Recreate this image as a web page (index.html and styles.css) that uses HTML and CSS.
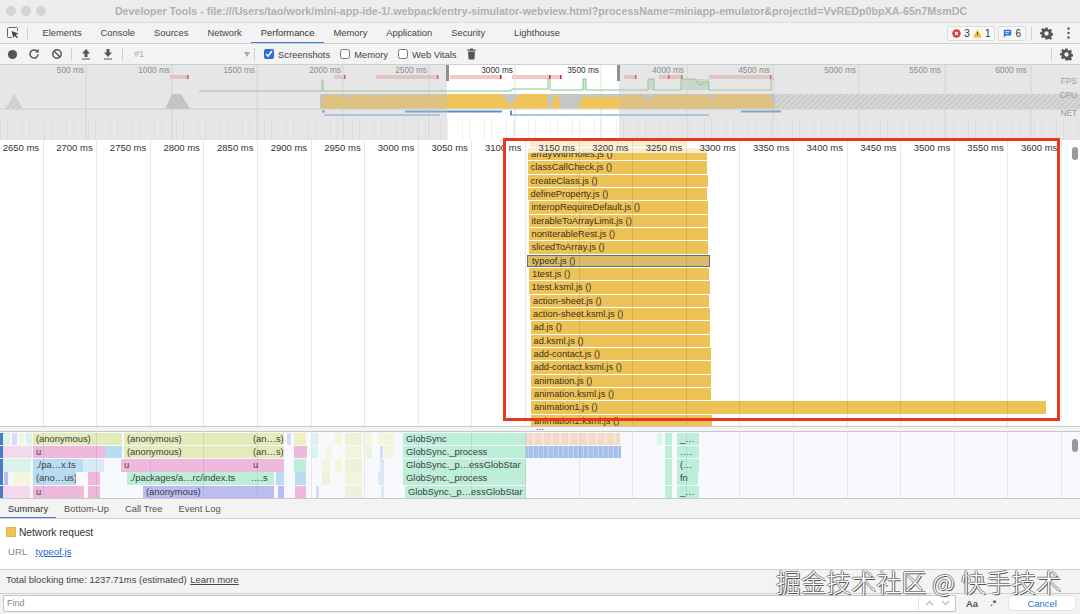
FILE: index.html
```html
<!DOCTYPE html>
<html lang="en">
<head>
	<meta charset="UTF-8">
	<title>Developer Tools</title>
	<link rel="stylesheet" href="styles.css">
</head>
<body>
	<div id="app">
		<header class="titlebar">
			<div class="lights"><i></i><i></i><i></i></div>
			<div class="title">Developer Tools - file:///Users/tao/work/mini-app-ide-1/.webpack/entry-simulator-webview.html?processName=miniapp-emulator&amp;projectId=VvREDp0bpXA-65n7MsmDC</div>
		</header>

		<nav class="tabbar">
			<svg class="ic-inspect" width="12" height="12" viewBox="0 0 12 12"><path d="M5 10.5H1.5a1 1 0 0 1-1-1V1.5a1 1 0 0 1 1-1h8a1 1 0 0 1 1 1V4" fill="none" stroke="#666"/><path d="M4.5 4l7 2.6-2.8 1.1 2.3 2.6-1 1-2.4-2.6-1 2.6z" fill="#444"/></svg>
			<span class="sep"></span>
			<a class="tab">Elements</a>
			<a class="tab">Console</a>
			<a class="tab">Sources</a>
			<a class="tab">Network</a>
			<a class="tab on">Performance</a>
			<a class="tab">Memory</a>
			<a class="tab">Application</a>
			<a class="tab">Security</a>
			<a class="tab last">Lighthouse</a>
			<div class="tab-right">
				<div class="badge">
					<svg width="9" height="9" viewBox="0 0 9 9"><circle cx="4.5" cy="4.5" r="4.2" fill="#d93a3f"/><path d="M3 3l3 3M6 3L3 6" stroke="#fff" stroke-width="1.1"/></svg>
					<span>3</span>
					<svg width="9" height="9" viewBox="0 0 9 9"><path d="M4.5.4L8.8 8.4H.2z" fill="#f2bd2e"/><path d="M4.5 3v3" stroke="#6b5410"/></svg>
					<span>1</span>
				</div>
				<div class="badge">
					<svg width="9" height="9" viewBox="0 0 9 9"><path d="M.8.8h7.4v5.6H3L.8 8.4z" fill="#2f74e0"/><path d="M2.2 2.6h4.6M2.2 4.4h3.4" stroke="#fff" stroke-width=".8"/></svg>
					<span>6</span>
				</div>
				<span class="sep"></span>
				<svg class="gear" width="13" height="13" viewBox="0 0 24 24"><use href="#gear-shape"/></svg>
				<svg class="dots" width="3" height="12" viewBox="0 0 3 12"><circle cx="1.5" cy="1.5" r="1.2"/><circle cx="1.5" cy="6" r="1.2"/><circle cx="1.5" cy="10.5" r="1.2"/></svg>
			</div>
		</nav>

		<div class="toolbar">
			<svg class="tool" width="11" height="11" viewBox="0 0 11 11"><circle cx="5.5" cy="5.5" r="4.6" fill="#555"/></svg>
			<svg class="tool" width="12" height="12" viewBox="0 0 12 12"><path d="M10 6.2a4 4 0 1 1-1.2-3" fill="none" stroke="#555" stroke-width="1.5"/><path d="M10.6.8v3.6H7z" fill="#555"/></svg>
			<svg class="tool" width="12" height="12" viewBox="0 0 12 12"><circle cx="6" cy="6" r="4.2" fill="none" stroke="#555" stroke-width="1.5"/><path d="M3 3l6 6" stroke="#555" stroke-width="1.5"/></svg>
			<span class="sep"></span>
			<svg class="tool" width="10" height="12" viewBox="0 0 10 12"><path d="M5 1l4 4.5H6.5V9h-3V5.5H1zM1 10.4h8v1H1z" fill="#555"/></svg>
			<svg class="tool" width="10" height="12" viewBox="0 0 10 12"><path d="M3.5 1h3v3.500H9L5 9 1 4.500h2.500zM1 10.4h8v1H1z" fill="#555"/></svg>
			<span class="sep"></span>
			<div class="rec-select"><span>#1</span><b></b></div>
			<span class="sep"></span>
			<label class="chk first"><input type="checkbox" checked>Screenshots</label>
			<label class="chk"><input type="checkbox">Memory</label>
			<label class="chk"><input type="checkbox">Web Vitals</label>
			<svg class="trash" width="9" height="12" viewBox="0 0 9 12"><path d="M3 .5h3v1h2.8v1.300H.2V1.500H3zM1 3.500h7L7.400 11.500H1.600z" fill="#555"/></svg>
			<div class="tool-right">
				<span class="sep"></span>
				<svg class="gear" width="13" height="13" viewBox="0 0 24 24"><use href="#gear-shape"/></svg>
			</div>
		</div>

		<section class="overview">
			<svg width="1080" height="75" viewBox="0 64 1080 75">
				<defs>
					<pattern id="hatch" width="4" height="4" patternUnits="userSpaceOnUse" patternTransform="rotate(45)">
						<rect width="4" height="4" fill="#e6e6e6"/><rect width="1.5" height="4" fill="#cbcbcb"/>
					</pattern>
					<pattern id="shots" width="22" height="24" patternUnits="userSpaceOnUse">
						<path d="M.5 0V24M7.5 0V24" stroke="#efefef" fill="none"/>
					</pattern>
					<path id="gear-shape" d="M10 1h4l.6 3.100 2.100.9 2.700-1.800 2.800 2.800-1.800 2.700.9 2.100 3.100.6v4l-3.100.6-.9 2.100 1.800 2.700-2.800 2.800-2.700-1.800-2.100.9L14 23h-4l-.6-3.100-2.100-.9-2.700 1.800-2.800-2.800 1.800-2.700-.9-2.100L0 14v-4l3.100-.6.9-2.100-1.800-2.700 2.800-2.800 2.700 1.800 2.100-.9zM12 8a4 4 0 1 0 0 8 4 4 0 0 0 0-8z" fill="#555" fill-rule="evenodd"/>
				</defs>

				<rect x="0" y="118" width="1080" height="21" fill="url(#shots)"/>
				<g class="ov-grid">
					<path d="M86 64V139M172 64V139M257 64V139M343 64V139M429 64V139M515 64V139M601 64V139M687 64V139M773 64V139M859 64V139M945 64V139M1031 64V139"/>
				</g>

				<g class="fps-bars">
					<rect x="170" y="74" width="19" height="4"/><rect x="334" y="74" width="11" height="4"/>
					<rect x="376" y="74" width="62" height="4"/><rect x="450" y="74" width="52" height="4"/>
					<rect x="512" y="74" width="49" height="4"/><rect x="624" y="74" width="12" height="4"/>
					<rect x="659" y="74" width="23" height="4"/><rect x="709" y="74" width="62" height="4"/>
				</g>
				<g class="fps-ticks">
					<rect x="187" y="74" width="1.5" height="4"/><rect x="344" y="74" width="1.5" height="4"/>
					<rect x="437" y="74" width="1.5" height="4"/><rect x="500" y="74" width="1.5" height="4"/>
					<rect x="549" y="74" width="1.5" height="4"/><rect x="560" y="74" width="1.5" height="4"/>
					<rect x="635" y="74" width="1.5" height="4"/><rect x="668" y="74" width="1.5" height="4"/>
					<rect x="681" y="74" width="1.5" height="4"/><rect x="770" y="74" width="1.5" height="4"/>
				</g>

				<rect class="fps-fill" x="681" y="78" width="28" height="11"/>
				<rect class="fps-fill" x="648" y="78" width="6" height="11"/>
				<rect class="fps-fill" x="583" y="78" width="3" height="11"/>
				<path class="fps-line" d="M199 90H322V79H323V90H511L512 88H548V78H550V89H583V78H586V89H648V78H654V89H681V78H696V81H699V84H702V81H709V89H771V78H774"/>

				<rect x="775" y="93" width="305" height="15" fill="url(#hatch)"/>
				<path d="M5 108L14 93L23 108z" fill="url(#hatch)"/>
				<path class="cpu-grey" d="M165 108L172 93H181L190 108zM320 93H775V108H320z"/>
				<path class="cpu-yellow" d="M320 108L324 94H345L349 98L353 94H376L379 97L383 94H445L447 93H500L505 97L511 105L516 97L520 93H547L549 108H552L554 94H558L561 108H578L582 96H618L625 94H640L650 100L656 94H708L712 99L716 93H770L775 108z"/>
				<line class="cpu-base" x1="0" y1="108" x2="1080" y2="108"/>

				<rect class="net-dark" x="405" y="109.5" width="97" height="2"/>
				<rect class="net-dark" x="741" y="109.5" width="40" height="2"/>
				<rect class="net-dark" x="322" y="109.5" width="3" height="2"/>
				<rect class="net-light" x="324" y="113" width="116" height="2"/>
				<rect class="net-light" x="512" y="113" width="197" height="2"/>
				<rect class="net-dark" x="510" y="109.5" width="2" height="5"/>

				<rect class="dim" x="0" y="64" width="447" height="75"/>
				<rect class="dim" x="619" y="64" width="461" height="75"/>
				<rect class="handle" x="446" y="64" width="3" height="16"/>
				<rect class="handle" x="617" y="64" width="3" height="16"/>

				<g class="ov-time">
					<text x="84" y="72">500 ms</text><text x="170" y="72">1000 ms</text><text x="255" y="72">1500 ms</text>
					<text x="341" y="72">2000 ms</text><text x="427" y="72">2500 ms</text>
					<text class="dark" x="513" y="72">3000 ms</text><text class="dark" x="599" y="72">3500 ms</text>
					<text x="684" y="72">4000 ms</text><text x="770" y="72">4500 ms</text><text x="856" y="72">5000 ms</text>
					<text x="941" y="72">5500 ms</text><text x="1027" y="72">6000 ms</text>
				</g>
				<g class="ov-lane">
					<text x="1077" y="83">FPS</text><text x="1077" y="97">CPU</text><text x="1077" y="115">NET</text>
				</g>
			</svg>
		</section>

		<section class="flame" id="flame"></section>
		<div class="splitter"><span>...</span></div>
		<section class="lower" id="lower"></section>

		<nav class="subtabs">
			<a class="subtab on">Summary</a>
			<a class="subtab">Bottom-Up</a>
			<a class="subtab">Call Tree</a>
			<a class="subtab">Event Log</a>
		</nav>

		<section class="summary">
			<div class="sum-head"><span class="swatch"></span>Network request</div>
			<div class="sum-url"><span class="key">URL</span><a class="link">typeof.js</a></div>
		</section>

		<footer class="status">Total blocking time: 1237.71ms (estimated) <a>Learn more</a></footer>

		<div class="findbar">
			<div class="find-input">
				<span class="find-ph">Find</span>
				<div class="find-arrows">
					<svg width="9" height="6" viewBox="0 0 9 6"><path d="M1 5l3.5-3.500L8 5" fill="none" stroke="#bbb" stroke-width="1.3"/></svg>
					<svg width="9" height="6" viewBox="0 0 9 6"><path d="M1 1l3.5 3.500L8 1" fill="none" stroke="#bbb" stroke-width="1.3"/></svg>
				</div>
			</div>
			<span class="find-aa">Aa</span>
			<span class="find-re">.*</span>
			<button class="find-cancel">Cancel</button>
		</div>
	</div>

	<div class="redframe"></div>
	<div class="watermark">掘金技术社区 @ 快手技术</div>

	<script src="flame.js"></script>
</body>
</html>
```

FILE: styles.css
```css
* {margin: 0; padding: 0; box-sizing: border-box;}
html, body {width: 1080px; height: 614px; overflow: hidden; background: #fff;}
body {font: 9px "Liberation Sans", Arial, sans-serif; color: #333;}
#app {display: flex; flex-direction: column; width: 1080px; height: 614px;}

.sep {display: block; width: 1px; height: 13px; background: #d0d0d0; flex: none;}

/* title */
.titlebar {position: relative; flex: none; height: 23px; background: #ededed; border-bottom: 1px solid #dcdcdc; display: flex; align-items: center; justify-content: center; padding-left: 2px;}
.lights {position: absolute; left: 6px; top: 6px; display: flex; gap: 5px;}
.lights i {display: block; width: 10px; height: 10px; border-radius: 50%; background: #d4d4d4;}
.title {font-size: 10.7px; font-weight: bold; color: #b0b0b0; white-space: nowrap;}

/* tabs */
.tabbar {flex: none; height: 21px; background: #f3f3f3; border-bottom: 1px solid #d0d0d0; display: flex; align-items: center; padding-left: 7px;}
.ic-inspect {flex: none; margin-right: 8px;}
.tabbar > .sep {margin-right: 5px;}
.tab {padding: 0 9.5px; height: 20px; line-height: 19px; color: #444; font-size: 9.4px; white-space: nowrap;}
.tab.on {color: #333; border-bottom: 1px solid #3d7fd6;}
.tab.last {margin-left: 10px;}
.tab-right {margin-left: auto; display: flex; align-items: center; padding-right: 10px;}
.badge {display: flex; align-items: center; gap: 3px; height: 15px; padding: 0 4px; margin-right: 3px; border: 1px solid #ddd; border-radius: 2px; background: #f8f8f8; font-size: 10px;}
.tab-right .sep {margin: 0 8px 0 2px;}
.dots {margin-left: 14px; fill: #555;}

/* toolbar */
.toolbar {flex: none; height: 21px; background: #f3f3f3; border-bottom: 1px solid #d0d0d0; display: flex; align-items: center; padding-left: 7px;}
.tool {flex: none;}
.toolbar > :nth-child(1) {margin-right: 10px;}
.toolbar > :nth-child(2) {margin-right: 11px;}
.toolbar > :nth-child(3) {margin-right: 8px;}
.toolbar > :nth-child(4) {margin-right: 9px;}
.toolbar > :nth-child(5) {margin-right: 12px;}
.toolbar > :nth-child(6) {margin-right: 9px;}
.rec-select {display: flex; align-items: center; justify-content: space-between; width: 126px; margin-left: 5px; padding: 0 4px 0 6px; color: #aaa;}
.rec-select b {width: 0; height: 0; border: 3px solid transparent; border-top: 5px solid #aaa; border-bottom: 0;}
.chk {display: flex; align-items: center; gap: 4px; margin-right: 10px; color: #444; font-size: 9.4px;}
.chk.first {margin-left: 9px;}
.chk input {width: 10px; height: 10px; margin: 0; accent-color: #2a6fd6;}
.trash {flex: none; margin-left: 1px;}
.tool-right {margin-left: auto; display: flex; align-items: center; gap: 8px; padding-right: 7px;}

/* overview */
.overview {flex: none; height: 75px; background: #fff; overflow: hidden;}
.overview svg {display: block;}
.ov-grid path {stroke: #e2e2e2; fill: none;}
.ov-time text {font: 8.3px "Liberation Sans", Arial, sans-serif; fill: #8e8e8e; text-anchor: end;}
.ov-time text.dark {fill: #333;}
.ov-lane text {font: 8.3px "Liberation Sans", Arial, sans-serif; fill: #999; text-anchor: end;}
.fps-bars rect {fill: #f6c5c5;}
.fps-ticks rect {fill: #d8202a;}
.fps-line {fill: none; stroke: #86c586;}
.fps-fill {fill: #cfe8cf;}
.cpu-grey {fill: #c6c6c6;}
.cpu-yellow {fill: #f0c457;}
.cpu-base {stroke: #d8d8d8;}
.net-dark {fill: #5f8fd0;}
.net-light {fill: #a9c7ec;}
.dim {fill: #c0c0c0; fill-opacity: .4;}
.handle {fill: #8f8f8f;}

/* main flame chart */
.flame {position: relative; flex: none; height: 286px; overflow: hidden; background: #fff;}
.lane {position: absolute; left: 0; top: 0; width: 1080px;}
.bar {position: absolute; height: 12.4px; line-height: 12.4px; padding-left: 3px; font-size: 9.3px; color: #3a3320; white-space: nowrap; overflow: hidden; background: #edc257;}
.bar.sel {padding-left: 5px; background: #dcbc68; outline: 1.5px solid #6e6e6e; outline-offset: -1px; z-index: 1;}
.ruler-band {position: absolute; left: 0; top: 0; width: 1080px; height: 13px; background: rgba(255, 255, 255, .72); z-index: 2;}
.grid {position: absolute; left: -10px; top: 0; height: 100%; display: flex; z-index: 3;}
.cell {flex: none; width: 53.6px; height: 100%; border-right: 1px solid rgba(0, 0, 0, .09); text-align: right; padding-right: 3.5px; font-size: 9.5px; line-height: 15px; color: #333; white-space: nowrap;}
.scroll-thumb {position: absolute; left: 1072px; width: 6px; height: 13px; border-radius: 3px; background: #9a9a9a; z-index: 4;}

.splitter {flex: none; height: 6px; background: #f3f3f3; border-top: 1px solid #c8c8c8; border-bottom: 1px solid #c8c8c8; padding-left: 536px; font-size: 9px; line-height: 1px; color: #444;}

/* lower flame chart */
.lower {position: relative; flex: none; height: 66px; overflow: hidden; background: #f8f9fd;}
.lower .bar {height: 12.6px; line-height: 12.6px; color: #3c3c3c; font-size: 9.4px;}
.lower .cell {border-right-color: rgba(0, 0, 0, .07);}
.c-g {background: #e2ebb9;}
.c-p {background: #efb9dd;}
.c-b {background: #b9dcf0;}
.c-m {background: #bceed9;}
.c-l {background: #bcbcf2;}
.c-y {background: #eef1bd;}
.c-e {background: #4a7ac8;}
.lower .c-o {background: repeating-linear-gradient(90deg, #f3d9c6 0, #f3d9c6 5px, #e6d8cc 5px, #e6d8cc 6px, #f6e4d6 6px, #f6e4d6 9px);}
.lower .c-s {background: repeating-linear-gradient(90deg, #a9c4ea 0, #a9c4ea 2px, #c3d3ee 2px, #c3d3ee 3px, #a2bfe8 3px, #a2bfe8 5px);}
.bar.f {opacity: .5;}

/* details */
.subtabs {flex: none; height: 21px; background: #f3f3f3; border-top: 1px solid #c8c8c8; border-bottom: 1px solid #d0d0d0; display: flex; align-items: stretch;}
.subtab {padding: 0 8px; line-height: 19px; color: #555; font-size: 9.4px; white-space: nowrap;}
.subtab.on {color: #333; border-bottom: 1px solid #3d7fd6;}
.summary {flex: none; height: 50px; padding: 7px 0 0 6px; background: #fff; overflow: hidden;}
.sum-head {display: flex; align-items: center; gap: 3px; height: 12px; font-size: 10.2px; color: #333;}
.swatch {display: block; width: 10px; height: 10px; background: #edc257; border: 1px solid #e2b546;}
.sum-url {display: flex; gap: 8px; margin-top: 8px; height: 12px; line-height: 12px; font-size: 9.7px;}
.key {color: #888; padding-left: 2px;}
.link {color: #1a66d2; text-decoration: underline;}
.status {flex: none; height: 25px; background: #f3f3f3; border-top: 1px solid #d0d0d0; border-bottom: 1px solid #d0d0d0; padding-left: 6px; line-height: 20px; color: #444; font-size: 9.5px;}
.status a {text-decoration: underline; margin-left: 1px;}

/* find */
.findbar {flex: 1; background: #f3f3f3; display: flex; align-items: center; padding: 0 3px 2px 3px;}
.find-input {flex: none; width: 953px; height: 17px; background: #fff; border: 1px solid #c4c4c4; border-radius: 2px; display: flex; align-items: center; justify-content: space-between;}
.find-ph {padding-left: 3px; color: #888;}
.find-arrows {display: flex; align-items: center; gap: 7px; height: 100%; padding: 0 5px 0 6px; border-left: 1px solid #e6e6e6;}
.find-aa {margin-left: 10px; font-size: 9.5px; font-weight: bold; color: #555;}
.find-re {margin-left: 12px; font-size: 9px; font-weight: bold; color: #555;}
.find-cancel {margin-left: 12px; width: 68px; height: 16px; font: 9.5px "Liberation Sans", Arial, sans-serif; color: #2a70dc; background: #fff; border: 1px solid #e2e2e2; border-radius: 4px;}

/* overlays */
.redframe {position: absolute; left: 503px; top: 138px; width: 557px; height: 283px; border: 3px solid #e8371b; z-index: 5;}
.watermark {position: absolute; left: 776px; top: 566px; font: 300 24.8px "Noto Sans CJK SC", sans-serif; line-height: 30px; letter-spacing: .3px; color: #fff; white-space: nowrap; text-shadow: 1px 1px 0 #555, -1px 0 0 #777, 0 -1px 0 #888; z-index: 6;}
```

FILE: flame.js
```js
var MARKS = [];
for (var t = 2650; t <= 3650; t += 50) {
	MARKS.push(t + " ms");
}

// label, left, right
var TOP_ROWS = [
	["", 530, 686],
	["arrayWithHoles.js ()", 528, 707],
	["classCallCheck.js ()", 527.5, 707],
	["createClass.js ()", 527.5, 707.5],
	["defineProperty.js ()", 527.5, 706.5],
	["interopRequireDefault.js ()", 528.5, 708],
	["iterableToArrayLimit.js ()", 528.5, 708],
	["nonIterableRest.js ()", 528.5, 708],
	["slicedToArray.js ()", 528.5, 708],
	["typeof.js ()", 527, 710],
	["1test.js ()", 529, 709],
	["1test.ksml.js ()", 528.5, 710],
	["action-sheet.js ()", 530, 709],
	["action-sheet.ksml.js ()", 530, 710],
	["ad.js ()", 530.5, 710],
	["ad.ksml.js ()", 530.5, 710],
	["add-contact.js ()", 530.5, 711],
	["add-contact.ksml.js ()", 530.5, 711],
	["animation.js ()", 531, 711],
	["animation.ksml.js ()", 531, 711],
	["animation1.js ()", 531, 1046],
	["animation1.ksml.js ()", 531, 711.5]
];

// row, left, right, colour, label (1 = pale stripe with no label)
var LOW_BARS = [
	[0,0,2,"e"],[1,0,2,"e"],[2,0,2,"e"],[3,0,2,"e"],[4,0,2,"e"],
	[0,3,10,"m",1],[0,12,17,"l",1],[0,19,24,"y",1],[0,26,32,"m",1],
	[1,3,32,"p",1],
	[2,3,31,"m",1],
	[3,4,8,"l"],[3,14,30,"y",1],
	[4,3,30,"p",1],
	[0,33,122,"g","(anonymous)"],
	[0,124,250,"g","(anonymous)"],
	[0,250,284,"g","(an…s)"],
	[0,287,291,"l",1],[0,294,306,"y"],
	[1,33,105,"p","u"],[1,105,122,"b"],
	[1,124,250,"g","(anonymous)"],
	[1,250,284,"g","(an…s)"],
	[1,294,307,"p"],
	[2,33,83,"b","./pa…x.ts"],[2,83,104,"b",1],
	[2,121,250,"p","u"],[2,250,284,"p","u"],
	[2,294,306,"m"],
	[3,33,76,"b","(ano…us)"],[3,88,100,"p"],
	[3,127,248,"m","./packages/a…rc/index.ts"],
	[3,248,274,"m","….s"],[3,276,284,"b"],[3,295,306,"b"],
	[4,33,84,"p","u"],[4,88,100,"p"],
	[4,143,274,"l","(anonymous)"],[4,278,284,"l"],[4,295,306,"p"],
	[0,312,318,"m",1],[0,335,342,"y",1],[0,345,362,"g",1],[0,366,372,"y",1],[0,378,394,"y",1],
	[1,312,318,"m",1],[1,326,332,"y",1],[1,345,362,"y",1],[1,366,372,"g",1],[1,380,383,"l",1],[1,384,394,"y",1],
	[2,322,330,"y",1],[2,335,342,"y",1],[2,345,362,"g",1],[2,380,384,"b",1],
	[3,322,330,"g",1],[3,345,362,"y",1],[3,378,384,"b",1],
	[4,316,319,"l",1],[4,345,362,"g",1],[4,381,384,"b",1],
	[0,403,526,"m","GlobSync"],
	[1,403,526,"m","GlobSync._process"],
	[2,403,526,"m","GlobSync._p…essGlobStar"],
	[3,403,526,"m","GlobSync._process"],
	[4,405,526,"m","GlobSync._p…essGlobStar"],
	[0,526,620,"o"],
	[1,526,621,"s"],
	[0,657,662,"m",1],[0,665,672,"m"],[1,665,672,"m"],[2,665,672,"m"],[3,665,672,"m"],[4,665,672,"m"],
	[0,677,699,"m","_…"],[1,677,699,"m","…."],[2,677,699,"m","(…"],[3,677,698,"m","fn"],[4,677,699,"m","_…"]
];

function makeBar(top, left, right, label) {
	var bar = document.createElement("div");
	bar.className = "bar";
	bar.style.top = top + "px";
	bar.style.left = left + "px";
	bar.style.width = (right - left) + "px";
	if (label) {
		bar.innerHTML = label;
	}
	return bar;
}

function makeGrid(labels) {
	var grid = document.createElement("div");
	grid.className = "grid";
	for (var i = 0; i < MARKS.length - 1; i++) {
		var cell = document.createElement("div");
		cell.className = "cell";
		if (labels) {
			cell.innerHTML = MARKS[i];
		}
		grid.appendChild(cell);
	}
	return grid;
}

function makeThumb(box, top) {
	var thumb = document.createElement("div");
	thumb.className = "scroll-thumb";
	thumb.style.top = top + "px";
	box.appendChild(thumb);
}

function drawTop() {
	var box = document.getElementById("flame");
	var lane = document.createElement("div");
	lane.className = "lane";
	for (var i = 0; i < TOP_ROWS.length; i++) {
		var row = TOP_ROWS[i];
		var bar = makeBar(-5.3 + i * 13.33, row[1], row[2], row[0]);
		if (row[0] == "typeof.js ()") {
			bar.className += " sel";
		}
		lane.appendChild(bar);
	}
	box.appendChild(lane);
	var band = document.createElement("div");
	band.className = "ruler-band";
	box.appendChild(band);
	box.appendChild(makeGrid(true));
	makeThumb(box, 7);
}

function drawLow() {
	var box = document.getElementById("lower");
	var lane = document.createElement("div");
	lane.className = "lane";
	for (var i = 0; i < LOW_BARS.length; i++) {
		var b = LOW_BARS[i];
		var hasText = typeof b[4] == "string";
		var bar = makeBar(0.5 + b[0] * 13.3, b[1], b[2], hasText ? b[4] : "");
		bar.className += " c-" + b[3];
		if (b[4] === 1) {
			bar.className += " f";
		}
		lane.appendChild(bar);
	}
	box.appendChild(lane);
	box.appendChild(makeGrid(false));
	makeThumb(box, 7);
}

drawTop();
drawLow();
```
